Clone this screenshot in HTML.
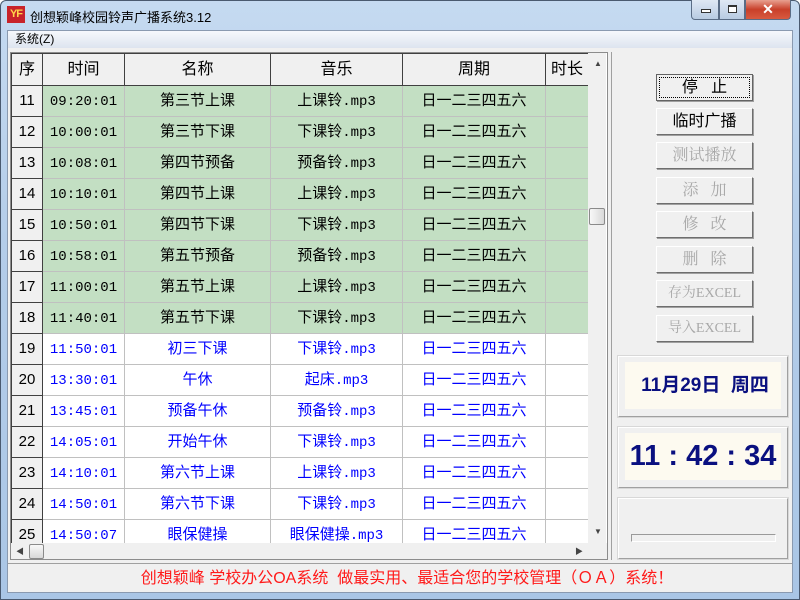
<!DOCTYPE html>
<html><head><meta charset="utf-8"><style>
*{margin:0;padding:0;box-sizing:border-box}
body{width:800px;height:600px;overflow:hidden;background:#fff;font-family:"Liberation Sans","Noto Sans CJK SC",sans-serif;position:relative}
.frame{position:absolute;left:0;top:0;width:800px;height:600px;background:linear-gradient(#c5daf1,#b4cde9 40%,#aac6e6);border:1px solid #4a5a70;border-radius:6px 6px 0 0}
.title{position:absolute;left:30px;top:7px;font-size:13px;color:#000}
.logo{position:absolute;left:7px;top:6px;width:18px;height:17px;background:#c8232a;color:#ffd54a;font:bold 11px "Liberation Sans",sans-serif;line-height:17px;text-align:center;letter-spacing:-1px}
.ctl{position:absolute;top:0;height:20px;border:1px solid #5a6c85;border-top:none}
.client{position:absolute;left:7px;top:30px;width:786px;height:563px;background:#f0f0f0;border:1px solid #8a9ab0}
.menu{position:absolute;left:8px;top:31px;width:784px;height:17px;background:linear-gradient(#f6f8fc,#dde4ef);font-size:12px;line-height:17px;padding-left:7px}
.grid{position:absolute;left:10px;top:52px;width:598px;height:508px;border:1px solid #8c8c8c;background:#fff;overflow:hidden}
table{border-collapse:collapse;table-layout:fixed;position:absolute;left:0;top:0}
td{height:31px;line-height:26px;vertical-align:middle;border:1px solid #c0c0c0;text-align:center;font-size:15px;white-space:nowrap;overflow:hidden;padding:0}
tr.h td{background:#f0f0f0;border-color:#404040;height:32px;font-size:16px}
tr.g td{background:#c3dfc3;color:#000}
tr.b td{color:#0000ff}
tr td.f{background:#f0f0f0;border-color:#404040;color:#000;font-size:15px}
td.t,td.m{font-family:"Liberation Mono",monospace;font-size:14px}
td.t{padding-top:2px;line-height:24px}
td.m span{font-family:"Liberation Sans","Noto Sans CJK SC",sans-serif;font-size:15px}
.vs{position:absolute;left:577px;top:0;width:18px;height:490px;background:#f0f0f0}
.hs{position:absolute;left:0;top:490px;width:577px;height:17px;background:#f0f0f0}
.btn{position:absolute;left:656px;width:97px;height:27px;border:1px solid #fff;border-right-color:#6e6e6e;border-bottom-color:#6e6e6e;box-shadow:1px 1px 0 #a0a0a0;background:#f0f0f0;font-size:16px;text-align:center;line-height:25px;color:#a8a8a8;font-family:"Liberation Serif","Noto Serif CJK SC",serif}
.btn.on{color:#000;font-family:"Liberation Sans","Noto Sans CJK SC",sans-serif}
.panel{position:absolute;left:618px;width:170px;height:61px;border:1px solid #a0a0a0;border-left-color:#fff;border-top-color:#fff;outline:1px solid #d8d8d8}
.cream{position:absolute;left:6px;top:5px;width:156px;height:47px;background:#fdfaf0;color:#0a1080;font-weight:bold;text-align:center;white-space:pre}
.status{position:absolute;left:8px;top:563px;width:784px;height:29px;border-top:1px solid #a0a0a0;text-align:center;color:#ff1a1a;font-size:16px;line-height:30px;padding-left:14px}
</style></head><body>
<div class="frame"></div>
<div class="logo">YF</div>
<div class="title">创想颖峰校园铃声广播系统3.12</div>
<div class="ctl" style="left:691px;width:28px;background:linear-gradient(#dfe8f4,#b8cbe2);border-radius:0 0 0 4px"><div style="position:absolute;left:9px;top:9px;width:10px;height:4px;border:1px solid #333;background:#fff"></div></div>
<div class="ctl" style="left:719px;width:26px;background:linear-gradient(#dfe8f4,#b8cbe2)"><div style="position:absolute;left:8px;top:5px;width:9px;height:8px;border:1px solid #333;border-top-width:2px;background:#fff"></div></div>
<div class="ctl" style="left:745px;width:46px;background:linear-gradient(#e8a090,#c8402a 50%,#d85a40);border-radius:0 0 4px 0;color:#fff;font:bold 14px 'Liberation Sans',sans-serif;text-align:center;line-height:18px">✕</div>
<div class="client"></div>
<div class="menu">系统(Z)</div>
<div class="grid">
<table>
<colgroup><col style="width:31px"><col style="width:82px"><col style="width:146px"><col style="width:132px"><col style="width:143px"><col style="width:43px"></colgroup>
<tr class="h"><td>序</td><td>时间</td><td>名称</td><td>音乐</td><td>周期</td><td>时长</td></tr>
<tr class="g"><td class="f">11</td><td class="t">09:20:01</td><td>第三节上课</td><td class="m"><span>上课铃</span>.mp3</td><td>日一二三四五六</td><td></td></tr>
<tr class="g"><td class="f">12</td><td class="t">10:00:01</td><td>第三节下课</td><td class="m"><span>下课铃</span>.mp3</td><td>日一二三四五六</td><td></td></tr>
<tr class="g"><td class="f">13</td><td class="t">10:08:01</td><td>第四节预备</td><td class="m"><span>预备铃</span>.mp3</td><td>日一二三四五六</td><td></td></tr>
<tr class="g"><td class="f">14</td><td class="t">10:10:01</td><td>第四节上课</td><td class="m"><span>上课铃</span>.mp3</td><td>日一二三四五六</td><td></td></tr>
<tr class="g"><td class="f">15</td><td class="t">10:50:01</td><td>第四节下课</td><td class="m"><span>下课铃</span>.mp3</td><td>日一二三四五六</td><td></td></tr>
<tr class="g"><td class="f">16</td><td class="t">10:58:01</td><td>第五节预备</td><td class="m"><span>预备铃</span>.mp3</td><td>日一二三四五六</td><td></td></tr>
<tr class="g"><td class="f">17</td><td class="t">11:00:01</td><td>第五节上课</td><td class="m"><span>上课铃</span>.mp3</td><td>日一二三四五六</td><td></td></tr>
<tr class="g"><td class="f">18</td><td class="t">11:40:01</td><td>第五节下课</td><td class="m"><span>下课铃</span>.mp3</td><td>日一二三四五六</td><td></td></tr>
<tr class="b"><td class="f">19</td><td class="t">11:50:01</td><td>初三下课</td><td class="m"><span>下课铃</span>.mp3</td><td>日一二三四五六</td><td></td></tr>
<tr class="b"><td class="f">20</td><td class="t">13:30:01</td><td>午休</td><td class="m"><span>起床</span>.mp3</td><td>日一二三四五六</td><td></td></tr>
<tr class="b"><td class="f">21</td><td class="t">13:45:01</td><td>预备午休</td><td class="m"><span>预备铃</span>.mp3</td><td>日一二三四五六</td><td></td></tr>
<tr class="b"><td class="f">22</td><td class="t">14:05:01</td><td>开始午休</td><td class="m"><span>下课铃</span>.mp3</td><td>日一二三四五六</td><td></td></tr>
<tr class="b"><td class="f">23</td><td class="t">14:10:01</td><td>第六节上课</td><td class="m"><span>上课铃</span>.mp3</td><td>日一二三四五六</td><td></td></tr>
<tr class="b"><td class="f">24</td><td class="t">14:50:01</td><td>第六节下课</td><td class="m"><span>下课铃</span>.mp3</td><td>日一二三四五六</td><td></td></tr>
<tr class="b"><td class="f">25</td><td class="t">14:50:07</td><td>眼保健操</td><td class="m"><span>眼保健操</span>.mp3</td><td>日一二三四五六</td><td></td></tr>
</table>
<div class="vs"><div style="position:absolute;left:6px;top:6px;font-size:8px;color:#444">▲</div><div style="position:absolute;left:1px;top:155px;width:16px;height:17px;border:1px solid #8a8a8a;border-radius:2px;background:linear-gradient(90deg,#f8f8f8,#d8d8d8)"></div><div style="position:absolute;left:6px;top:474px;font-size:8px;color:#444">▼</div></div>
<div class="hs"><div style="position:absolute;left:5px;top:3px;font-size:8px;color:#444">◀</div><div style="position:absolute;left:18px;top:1px;width:15px;height:15px;border:1px solid #8a8a8a;border-radius:2px;background:linear-gradient(#f8f8f8,#d8d8d8)"></div><div style="position:absolute;left:564px;top:3px;font-size:8px;color:#444">▶</div></div>
<div style="position:absolute;left:577px;top:490px;width:20px;height:18px;background:#f0f0f0"></div>
</div>
<div style="position:absolute;left:611px;top:52px;width:1px;height:508px;background:#a0a0a0"></div>
<div class="btn on" style="top:74px;border:1px solid #646464"><span style="display:block;margin:2px;border:1px dotted #000;line-height:19px">停&nbsp;&nbsp;&nbsp;止</span></div>
<div class="btn on" style="top:108px">临时广播</div>
<div class="btn" style="top:142px">测试播放</div>
<div class="btn" style="top:177px">添&nbsp;&nbsp;&nbsp;加</div>
<div class="btn" style="top:211px">修&nbsp;&nbsp;&nbsp;改</div>
<div class="btn" style="top:246px">删&nbsp;&nbsp;&nbsp;除</div>
<div class="btn" style="top:280px;font-size:14px">存为EXCEL</div>
<div class="btn" style="top:315px;font-size:14px">导入EXCEL</div>
<div class="panel" style="top:356px"><div class="cream" style="font-size:19px;line-height:47px;padding-left:4px">11月29日  周四</div></div>
<div class="panel" style="top:427px"><div class="cream" style="font-size:29px;line-height:47px">11 : 42 : 34</div></div>
<div class="panel" style="top:498px"><div style="position:absolute;left:12px;top:35px;width:145px;height:8px;border:1px solid #9a9a9a;border-right-color:#fff;border-bottom-color:#fff"></div></div>
<div class="status">创想颖峰 学校办公OA系统&nbsp;&nbsp;做最实用、最适合您的学校管理（ＯＡ）系统！</div>
</body></html>
